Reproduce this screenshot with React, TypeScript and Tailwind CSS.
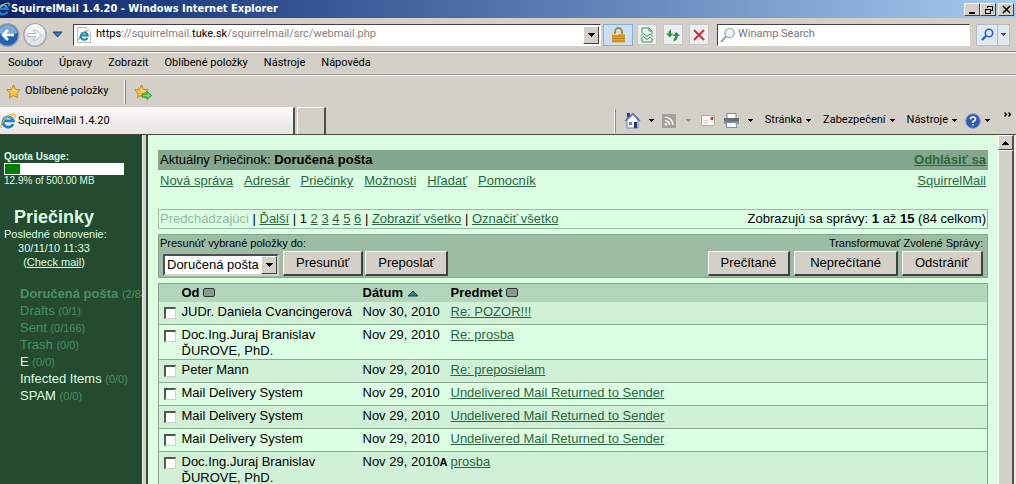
import { useState } from "react";
import type { ReactNode } from "react";

const folders = [
  { name: "Doručená pošta", count: "(2/84)", style: "font-bold text-[#4a8f64]" },
  { name: "Drafts", count: "(0/1)", style: "text-[#4a8f64]" },
  { name: "Sent", count: "(0/166)", style: "text-[#4a8f64]" },
  { name: "Trash", count: "(0/0)", style: "text-[#4a8f64]" },
  { name: "E", count: "(0/0)", style: "text-[#dcffe4]" },
  { name: "Infected Items", count: "(0/0)", style: "text-[#dcffe4]" },
  { name: "SPAM", count: "(0/0)", style: "text-[#dcffe4]" },
];

const messages = [
  { from: "JUDr. Daniela Cvancingerová", date: "Nov 30, 2010", flag: "", subject: "Re: POZOR!!!" },
  { from: "Doc.Ing.Juraj Branislav ĎUROVE, PhD.", date: "Nov 29, 2010", flag: "", subject: "Re: prosba" },
  { from: "Peter Mann", date: "Nov 29, 2010", flag: "", subject: "Re: preposielam" },
  { from: "Mail Delivery System", date: "Nov 29, 2010", flag: "", subject: "Undelivered Mail Returned to Sender" },
  { from: "Mail Delivery System", date: "Nov 29, 2010", flag: "", subject: "Undelivered Mail Returned to Sender" },
  { from: "Mail Delivery System", date: "Nov 29, 2010", flag: "", subject: "Undelivered Mail Returned to Sender" },
  { from: "Doc.Ing.Juraj Branislav ĎUROVE, PhD.", date: "Nov 29, 2010", flag: "A", subject: "prosba" },
];

function IeLogo({ className = "size-4" }: { className?: string }) {
  return (
    <svg viewBox="0 0 16 16" className={`shrink-0 ${className}`} fill="none">
      <path d="M13 11a5.2 5.2 0 1 1 .3-3.2H4.5" stroke="#1d7fd0" strokeWidth="2.8" />
      <path d="M12.4 6A5 5 0 0 0 4 5.4" stroke="#6fc0f2" strokeWidth="1" />
      <path d="M1.5 14.8C-.8 11.500 6.500 2 13 1.200c2.600-.3 2.400 1.800 1.500 3.300" stroke="#e8b020" strokeWidth="1.300" />
    </svg>
  );
}

function Caret({ className = "text-black" }: { className?: string }) {
  return (
    <svg viewBox="0 0 5 3" className={`h-[3px] w-[5px] shrink-0 ${className}`} fill="currentColor" shapeRendering="crispEdges">
      <path d="M0 0h5L2.500 3z" />
    </svg>
  );
}

function DropArrow() {
  return (
    <span className="flex w-4 items-center justify-center border border-t-white border-l-white border-r-[#404040] border-b-[#404040] bg-[#d4d0c8]">
      <svg viewBox="0 0 7 4" className="h-1 w-[7px]" shapeRendering="crispEdges">
        <path d="M0 0h7L3.500 4z" />
      </svg>
    </span>
  );
}

function Star({ children }: { children?: ReactNode }) {
  return (
    <svg viewBox="0 0 18 16" className="h-4 w-[18px] shrink-0">
      <path
        d="M7.500 1l2 4.300 4.700.6-3.400 3.200.9 4.700-4.200-2.300-4.200 2.300.9-4.700L.8 5.900l4.700-.6z"
        fill="#f9c440"
        stroke="#c98516"
        strokeLinejoin="round"
      />
      <path d="M7.500 3l1 3 3 .5-4 1z" fill="#fff0a8" />
      {children}
    </svg>
  );
}

function TitleBar() {
  const box =
    "flex h-[13px] w-4 items-center justify-center border border-t-white border-l-white border-r-[#404040] border-b-[#404040] bg-[#d4d0c8]";
  return (
    <header className="flex h-[18px] items-center bg-linear-to-r from-[#0a246a] to-[#a6caf0] pr-0.5">
      <IeLogo className="-ml-1 size-[14px]" />
      <h1 className="ml-px flex-1 font-['DejaVu_Sans_Condensed','DejaVu_Sans',sans-serif] text-[11px] font-bold text-white">
        SquirrelMail 1.4.20 - Windows Internet Explorer
      </h1>
      <button aria-label="Minimize" className={box}>
        <svg viewBox="0 0 9 9" className="size-[9px]" shapeRendering="crispEdges"><path d="M1 7h6v2H1z" /></svg>
      </button>
      <button aria-label="Restore" className={box}>
        <svg viewBox="0 0 9 9" className="size-[9px]" fill="none" stroke="#000" shapeRendering="crispEdges">
          <path d="M3.500 3V1.500h5v4H7M3 1h6M1.500 4.500h5v4h-5zM1 4h6" />
        </svg>
      </button>
      <button aria-label="Close" className={`ml-0.5 ${box}`}>
        <svg viewBox="0 0 9 9" className="size-[9px]" stroke="#000" strokeWidth="1.600"><path d="M1 1l7 7M8 1L1 8" /></svg>
      </button>
    </header>
  );
}

function AddressRow() {
  const [editing, setEditing] = useState(false);
  const [url, setUrl] = useState("https://squirrelmail.tuke.sk/squirrelmail/src/webmail.php");
  const tool = "flex h-[21px] w-5 items-center justify-center border border-[#c3c6cc] bg-[#eceef2]";
  return (
    <div className="flex h-[34px] items-center border-b border-[#85827c] pr-1.5">
      <button aria-label="Back" className="-ml-1 shrink-0">
        <svg viewBox="0 0 24 26" className="h-[26px] w-6">
          <circle cx="11.500" cy="13" r="12" fill="#9aa0a8" />
          <circle cx="11.500" cy="13" r="10.500" fill="#2460b4" />
          <path d="M2 11a9.600 9.600 0 0 1 19 0q-9 3-19 0z" fill="#7ba9e0" />
          <path d="M18 13H7m5-5l-5 5 5 5" fill="none" stroke="#fff" strokeWidth="2.600" />
        </svg>
      </button>
      <button aria-label="Forward" className="ml-0.5 shrink-0">
        <svg viewBox="0 0 26 26" className="size-[26px]">
          <circle cx="13" cy="13" r="12" fill="#a5a8ad" />
          <circle cx="13" cy="13" r="10.500" fill="#dfe3ea" />
          <path d="M3 12a10 10 0 0 1 20 0q-10 3-20 0z" fill="#f4f6f9" />
          <path d="M6 11.500h8l-3-3.500h3l5.500 5-5.500 5h-3l3-3.500H6z" fill="#fff" stroke="#b4b9c2" />
        </svg>
      </button>
      <button aria-label="Recent pages" className="ml-1 shrink-0">
        <svg viewBox="0 0 11 7" className="h-[7px] w-[11px]"><path d="M1 1h9L5.500 6z" fill="#3b78b4" stroke="#1d3f70" /></svg>
      </button>
      <div className="ml-2.5 flex h-[22px] flex-1 border border-t-[#404040] border-l-[#404040] border-r-white border-b-white bg-white">
        <span className="ml-0.5 flex w-4 items-center justify-center">
          <svg viewBox="0 0 14 16" className="h-4 w-[14px]">
            <path d="M.5.5h9l4 4v11H.5z" fill="#fff" stroke="#b9b9b9" />
            <path d="M10.500 10.800a3.600 3.600 0 1 1 .3-2.300H4" fill="none" stroke="#1d7fa8" strokeWidth="2" />
            <path d="M2 13C1 10 7 4 11 3.600" fill="none" stroke="#6aa838" />
          </svg>
        </span>
        <div className="relative flex flex-1 items-center">
          <input
            id="address"
            className="h-full w-full bg-transparent text-[11px] outline-none"
            value={editing ? url : ""}
            onFocus={() => setEditing(true)}
            onBlur={() => setEditing(false)}
            onChange={(e) => setUrl(e.target.value)}
          />
          {!editing && (
            <label htmlFor="address" className="absolute left-1 text-[11px] text-[#808080]">
              <span className="text-black">https</span>://squirrelmail.<span className="text-black">tuke.sk</span>
              /squirrelmail/src/webmail.php
            </label>
          )}
        </div>
        <button aria-label="Show history" className="flex p-px"><DropArrow /></button>
      </div>
      <button aria-label="Security report" className="ml-0.5 flex h-[22px] w-[30px] items-center justify-center border border-[#7fb0e0] bg-[#c9e0fa]">
        <svg viewBox="0 0 15 16" className="h-4 w-[15px]">
          <path d="M4 8V4.500a3.500 3.500 0 0 1 7 0V8" fill="none" stroke="#a88432" strokeWidth="1.800" />
          <path d="M1 7h13v8.500H1z" fill="#e8a82c" />
          <path d="M1 9h13M1 11.500h13M1 14h13" stroke="#b9781a" />
          <path d="M2 7.500h5" stroke="#ffe28a" />
        </svg>
      </button>
      <div className="ml-1 flex gap-1.5">
        <button aria-label="Compatibility view" className={tool}>
          <svg viewBox="0 0 14 16" className="h-4 w-[14px]" fill="none" stroke="#3c9a50">
            <path d="M2 6V1h7l3 3v3M9 1v3h3M2 12v3h10v-3" />
            <path d="M.5 9l3-2.500L7 9.500 10 7l3 2.500M.5 12l3-2.500L7 12.500l3-2.500 3 2.500" />
          </svg>
        </button>
        <button aria-label="Refresh" className={tool}>
          <svg viewBox="0 0 14 14" className="size-[14px]" fill="#2f9440">
            <path d="M0 5.500h2.500V3.500L5 1v4.500h2.500L3.700 9.500z" />
            <path d="M6.500 8l3.800-4L14 8h-2.300q0 4-4 5.500V11Q9 10 9 8z" />
          </svg>
        </button>
        <button aria-label="Stop" className={tool}>
          <svg viewBox="0 0 12 12" className="size-3" stroke="#c8323c" strokeWidth="2"><path d="M1 1l10 10M11 1L1 11" /></svg>
        </button>
      </div>
      <div className="ml-2 flex h-[22px] w-[253px] items-center border border-t-[#404040] border-l-[#404040] border-r-white border-b-white bg-white pl-0.5">
        <svg viewBox="0 0 16 16" className="size-4" fill="none">
          <circle cx="9.500" cy="6" r="4.600" fill="#edf5fb" stroke="#98b0c8" strokeWidth="1.400" />
          <path d="M6 9.500L1 15" stroke="#98a4b0" strokeWidth="2" />
        </svg>
        <input aria-label="Search" placeholder="Winamp Search" className="ml-0.5 flex-1 text-[11px] outline-none placeholder:text-[#757575]" />
      </div>
      <div className="ml-1.5 flex h-[22px] border border-[#b4bccb] bg-[#e2e8f1]">
        <button aria-label="Run search" className="flex w-5 items-center justify-center">
          <svg viewBox="0 0 13 13" className="size-[13px]" fill="none" stroke="#2468c0">
            <circle cx="8" cy="5" r="3.700" strokeWidth="1.600" />
            <path d="M5 8l-4 4" strokeWidth="2.400" />
          </svg>
        </button>
        <button aria-label="Search options" className="flex w-3 items-center justify-center border-l border-[#b4bccb]">
          <Caret className="text-[#1d4f98]" />
        </button>
      </div>
    </div>
  );
}

function Toolbars() {
  const items = ["Soubor", "Úpravy", "Zobrazit", "Oblíbené položky", "Nástroje", "Nápověda"];
  return (
    <>
      <nav className="flex h-[23px] items-center gap-4 border-t border-b border-t-white border-b-[#a09c94] pl-2">
        {items.map((item) => (
          <button key={item}>{item}</button>
        ))}
      </nav>
      <div className="flex h-8 items-center border-t border-white pl-1.5">
        <button className="flex items-center gap-px">
          <Star />
          Oblíbené položky
        </button>
        <span className="ml-4 h-6 border-l border-white" />
        <span className="h-6 border-l border-[#808080]" />
        <button aria-label="Add to favourites" className="ml-2">
          <Star>
            <path d="M8 10h5V7.500l4.500 4-4.500 4V13H8z" fill="#6ee05a" stroke="#1f9428" />
          </Star>
        </button>
      </div>
      <div className="flex h-[27px] items-stretch">
        <button className="flex w-[295px] items-center gap-0.5 border-t border-r-2 border-t-white border-r-[#504e4a] bg-linear-to-b from-[#fbfafa] to-[#e8e5e2]">
          <IeLogo />
          SquirrelMail 1.4.20
        </button>
        <button aria-label="New tab" className="ml-0.5 w-[29px] border-t border-l border-r-2 border-t-white border-l-white border-r-[#504e4a]" />
        <div className="ml-auto flex items-center pr-1">
          <span className="h-6 border-l border-white" />
          <span className="h-6 border-l border-[#908c86]" />
          <button aria-label="Home" className="ml-2 flex items-center gap-2">
            <svg viewBox="0 0 17 17" className="size-[17px]">
              <path d="M3 1h3v6H3z" fill="#2c40a8" />
              <path d="M3 8l6-5.500L14 8v8H3z" fill="#f2f5fb" stroke="#7884a8" />
              <path d="M1 9l8-7.500L16 9" fill="none" stroke="#5a74b0" strokeWidth="1.500" />
              <path d="M5 10h3v3H5z" fill="#5a8ad0" />
              <path d="M10 10h3v6h-3z" fill="#27366c" />
            </svg>
            <Caret />
          </button>
          <button aria-label="Feeds" className="ml-2 flex items-center gap-2.5">
            <svg viewBox="0 0 14 14" className="size-[14px]" fill="none">
              <path d="M0 0h14v14H0z" fill="#a2a09c" />
              <path d="M3 6.500a5 5 0 0 1 4.500 4.500M3 3a8 8 0 0 1 8 8" stroke="#f4f4f4" strokeWidth="1.600" />
              <circle cx="4" cy="10.300" r="1.200" fill="#f4f4f4" />
            </svg>
            <Caret className="text-[#98948e]" />
          </button>
          <button aria-label="Read mail" className="ml-2.5">
            <svg viewBox="0 0 14 11" className="h-[11px] w-[14px]">
              <path d="M.5.5h13v10H.5z" fill="#f8f6f4" stroke="#b4afaa" />
              <path d="M9.500 2h3v3h-3z" fill="#cc4848" />
              <path d="M3 5.500h4M3 7.500h4" stroke="#d8d4d0" />
            </svg>
          </button>
          <button aria-label="Print" className="ml-2 flex items-center gap-2">
            <svg viewBox="0 0 17 15" className="h-[15px] w-[17px]">
              <path d="M4 .5h9V6H4z" fill="#fff" stroke="#888" />
              <path d="M1 5h15v6H1z" fill="#686c74" />
              <path d="M1 8.500h15V11H1z" fill="#90949c" />
              <path d="M4 9.500h9l1 5H3z" fill="#f4f6fa" stroke="#7890b8" />
            </svg>
            <Caret />
          </button>
          <div className="ml-3 flex items-center gap-3">
            {["Stránka", "Zabezpečení", "Nástroje"].map((item) => (
              <button key={item} className="flex items-center gap-1">
                {item}
                <Caret />
              </button>
            ))}
          </div>
          <button aria-label="Help" className="ml-2 flex items-center gap-1">
            <svg viewBox="0 0 16 16" className="size-4">
              <circle cx="8" cy="8" r="7.300" fill="#2c5fb8" stroke="#8c9cb8" />
              <path d="M5.500 6.300Q5.500 4 8 4t2.500 2.200Q10.500 7.500 8 8.500V10" fill="none" stroke="#fff" strokeWidth="1.600" />
              <path d="M7.200 11h1.600v1.600H7.200z" fill="#fff" />
            </svg>
            <Caret />
          </button>
          <button aria-label="More tools" className="mb-3 ml-3.5">
            <svg viewBox="0 0 8 5" className="h-[5px] w-2" fill="none" stroke="#000" strokeWidth="1.300">
              <path d="M.5.500l2 2-2 2M4.500.500l2 2-2 2" />
            </svg>
          </button>
        </div>
      </div>
    </>
  );
}

function Sidebar() {
  return (
    <aside className="w-[142px] shrink-0 overflow-hidden bg-[#244a30] pt-4 pl-1 whitespace-nowrap text-[#dcffe4]">
      <p className="text-[10px] leading-3 font-bold">Quota Usage:</p>
      <div className="h-3 w-[120px] border border-white bg-white">
        <div className="h-full bg-[#008000]" style={{ width: "12.9%" }} />
      </div>
      <p className="text-[10px] leading-3">12.9% of 500.00 MB</p>
      <div className="mt-5 w-[100px] text-center text-[11px] leading-[14px]">
        <h2 className="text-[18px] leading-5 font-bold">Priečinky</h2>
        <p>Posledné obnovenie:</p>
        <p>30/11/10 11:33</p>
        <p>
          (<a href="#check" className="underline">Check mail</a>)
        </p>
      </div>
      <ul className="mt-4 pl-4 text-[13px] leading-[17px]">
        {folders.map((f) => (
          <li key={f.name}>
            <a href="#folder" className={f.style}>{f.name}</a>{" "}
            <span className="text-[11px] leading-none text-[#4a8f64]">{f.count}</span>
          </li>
        ))}
      </ul>
    </aside>
  );
}

function Link({ children }: { children: ReactNode }) {
  return <a href="#mail" className="text-[#2a6840] underline">{children}</a>;
}

function WinButton({ children, padding = "px-3" }: { children: ReactNode; padding?: string }) {
  return (
    <button
      className={`h-[25px] border-t border-r-2 border-b-2 border-l border-t-white border-r-[#404040] border-b-[#404040] border-l-white bg-[#d4d0c8] ${padding}`}
    >
      {children}
    </button>
  );
}

function SortIcon() {
  return <span className="inline-block h-[9px] w-3 rounded-xs border border-[#2c3830] bg-[#8c9890]" />;
}

function Mailbox() {
  return (
    <main className="flex-1 overflow-hidden bg-[#dcffe4] px-2.5 pt-[15px] text-[13px] leading-4 text-black">
      <div className="flex h-5 items-center justify-between bg-[#86a68f] px-0.5">
        <span>Aktuálny Priečinok: <b>Doručená pošta</b></span>
        <b><Link>Odhlásiť sa</Link></b>
      </div>
      <nav className="flex h-[22px] items-center gap-[11px] px-0.5">
        {["Nová správa", "Adresár", "Priečinky", "Možnosti", "Hľadať", "Pomocník"].map((item) => (
          <Link key={item}>{item}</Link>
        ))}
        <span className="ml-auto"><Link>SquirrelMail</Link></span>
      </nav>
      <div className="mt-[17px] flex h-5 items-center justify-between border border-[#9cbca4] px-px">
        <span>
          <span className="text-[#98b8a0]">Predchádzajúci</span> | <Link>Ďalší</Link> | 1{" "}
          {[2, 3, 4, 5, 6].map((n) => (
            <span key={n}><Link>{n}</Link> </span>
          ))}
          | <Link>Zobraziť všetko</Link> | <Link>Označiť všetko</Link>
        </span>
        <span>Zobrazujú sa správy: <b>1</b> až <b>15</b> (84 celkom)</span>
      </div>
      <div className="mt-[5px] flex h-11 justify-between border border-[#86a68f] bg-[#9cbca4] px-px">
        <div>
          <label htmlFor="target" className="block text-[11px]">Presunúť vybrané položky do:</label>
          <div className="flex gap-0.5 pl-[3px]">
            <div className="relative mt-[3px] mr-0.5">
              <select
                id="target"
                className="h-[22px] w-[116px] appearance-none border-2 border-t-[#505050] border-l-[#505050] border-r-[#d4d0c8] border-b-[#d4d0c8] bg-white pl-0.5"
              >
                <option>Doručená pošta</option>
              </select>
              <span className="pointer-events-none absolute inset-y-0.5 right-0.5 flex"><DropArrow /></span>
            </div>
            <WinButton>Presunúť</WinButton>
            <WinButton>Preposlať</WinButton>
          </div>
        </div>
        <div className="pr-[3px]">
          <p className="text-right text-[11px]">Transformuvať Zvolené Správy:</p>
          <div className="flex justify-end gap-1">
            <WinButton>Prečítané</WinButton>
            <WinButton padding="px-[15px]">Neprečítané</WinButton>
            <WinButton>Odstrániť</WinButton>
          </div>
        </div>
      </div>
      <table className="mt-[5px] w-full table-fixed border-collapse border border-[#86a68f] text-left">
        <colgroup>
          <col className="w-[23px]" />
          <col className="w-[181px]" />
          <col className="w-[77px]" />
          <col className="w-[11px]" />
          <col />
        </colgroup>
        <thead>
          <tr className="h-[18px] bg-[#b3d5bc]">
            <th />
            <th>Od <SortIcon /></th>
            <th>
              Dátum{" "}
              <svg viewBox="0 0 12 7" className="inline-block h-[7px] w-3"><path d="M1 6h10L6 1z" fill="#2c8490" stroke="#1c3c48" /></svg>
            </th>
            <th />
            <th>Predmet <SortIcon /></th>
          </tr>
        </thead>
        <tbody>
          {messages.map((m, i) => (
            <tr key={i} className="h-[23px] border-b border-[#8cac94] align-top odd:bg-[#d0f0d8]">
              <td className="pt-[5px] pl-[5px]">
                <input
                  type="checkbox"
                  aria-label={`${m.from}, ${m.subject}`}
                  className="block size-3 appearance-none border border-t-2 border-l-2 border-t-[#505850] border-l-[#505850] border-r-[#d4d0c8] border-b-[#d4d0c8] bg-white checked:bg-[#404040]"
                />
              </td>
              <td className="pt-0.5 pr-2">{m.from}</td>
              <td className="pt-0.5 whitespace-nowrap">{m.date}</td>
              <td className="pt-0.5 text-[11px] font-bold">{m.flag}</td>
              <td className="pt-0.5"><Link>{m.subject}</Link></td>
            </tr>
          ))}
        </tbody>
      </table>
    </main>
  );
}

function Scrollbar() {
  return (
    <div className="flex w-4 shrink-0 flex-col bg-[#d4d0c8]">
      <button aria-label="Scroll up" className="flex h-[15px] items-center justify-center border border-r-2 border-t-white border-l-white border-r-[#505050] border-b-[#404040]">
        <svg viewBox="0 0 7 4" className="h-1 w-[7px]" shapeRendering="crispEdges"><path d="M0 4h7L3.500 0z" /></svg>
      </button>
      <div className="flex-1 border-t border-r-2 border-l border-t-white border-l-white border-r-[#505050]" />
    </div>
  );
}

export default function App() {
  return (
    <div className="flex h-screen flex-col overflow-hidden bg-[#d4d0c8] font-[Roboto,'DejaVu_Sans',sans-serif] text-[11px] text-black">
      <TitleBar />
      <AddressRow />
      <Toolbars />
      <div className="flex min-h-0 flex-1 border-t border-[#404840] font-['Liberation_Sans',Arial,sans-serif]">
        <Sidebar />
        <div className="w-1.5 shrink-0 border-r-2 border-l border-r-[#404840] border-l-[#eeeae6] bg-[#d4d0c8]" />
        <Mailbox />
        <Scrollbar />
        <div className="w-0.5 shrink-0 bg-[#eceae6]" />
      </div>
    </div>
  );
}
